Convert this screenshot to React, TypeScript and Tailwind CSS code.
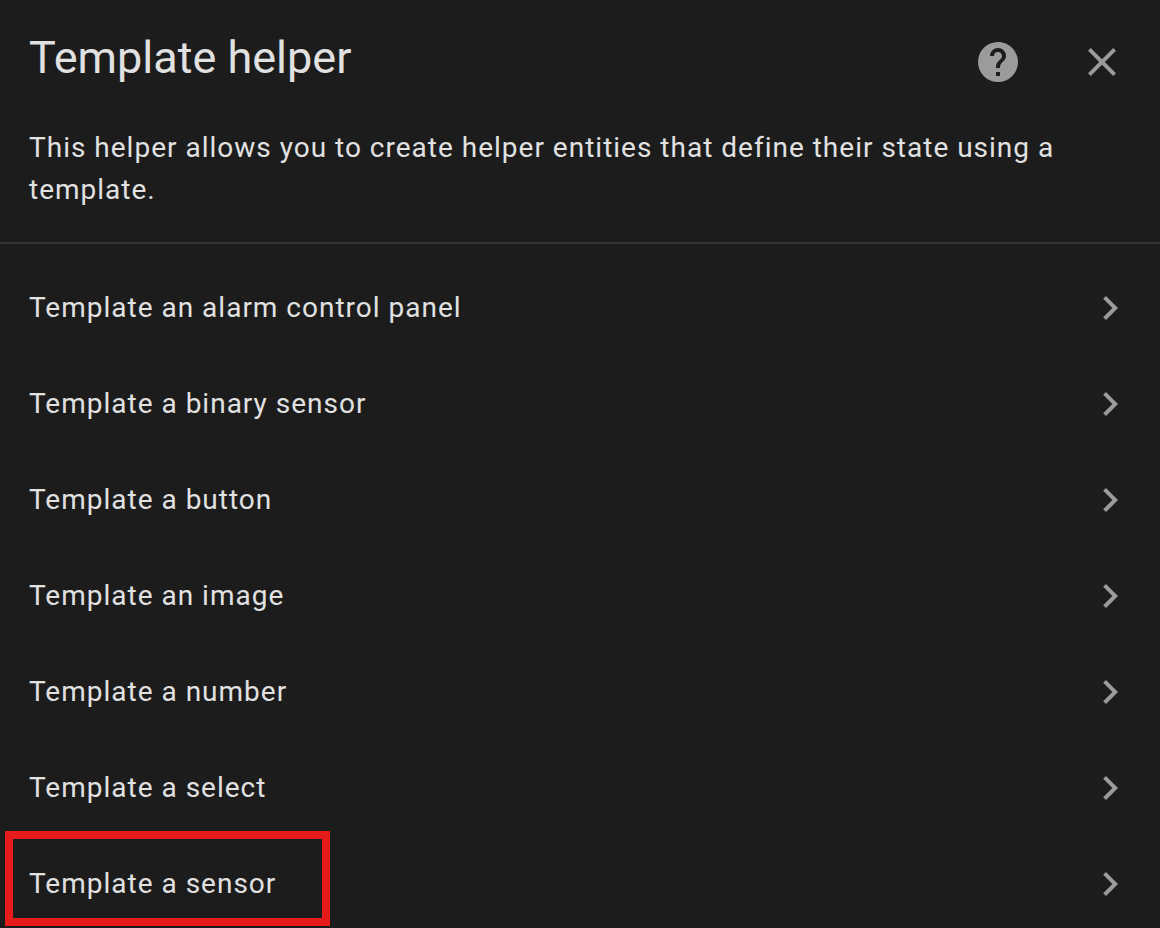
const options = [
  'Template an alarm control panel',
  'Template a binary sensor',
  'Template a button',
  'Template an image',
  'Template a number',
  'Template a select',
  'Template a sensor',
];

export default function App() {
  return (
    <main className="min-h-screen overflow-hidden bg-[#1c1c1c] font-[Roboto,sans-serif] text-[#e1e1e1]">
      <header className="flex items-start justify-between pt-7 pr-[34px] pl-[29px]">
        <h1 className="text-[45px] leading-[60px]">Template helper</h1>
        <nav className="flex items-center gap-14 pt-2.5">
          <a href="#help" aria-label="Help" className="block text-[#9b9b9b]">
            <svg viewBox="0 0 24 24" className="size-12 fill-current">
              <path d="M15.07,11.25L14.17,12.17C13.45,12.89 13,13.5 13,15H11V14.5C11,13.39 11.45,12.39 12.17,11.67L13.41,10.41C13.78,10.05 14,9.55 14,9C14,7.89 13.1,7 12,7A2,2 0 0,0 10,9H8A4,4 0 0,1 12,5A4,4 0 0,1 16,9C16,9.88 15.64,10.67 15.07,11.25M13,19H11V17H13M12,2A10,10 0 0,0 2,12A10,10 0 0,0 12,22A10,10 0 0,0 22,12C22,6.47 17.5,2 12,2Z" />
            </svg>
          </a>
          <button type="button" aria-label="Close" className="block text-[#9b9b9b]">
            <svg viewBox="0 0 24 24" className="size-12 fill-current">
              <path d="M19,6.41L17.59,5L12,10.59L6.41,5L5,6.41L10.59,12L5,17.59L6.41,19L12,13.41L17.59,19L19,17.59L13.41,12L19,6.41Z" />
            </svg>
          </button>
        </nav>
      </header>
      <p className="max-w-[1100px] pt-[39px] pb-[31px] pl-[29px] text-[28px] leading-[42px] tracking-[1px]">
        This helper allows you to create helper entities that define their state using a template.
      </p>
      <ul className="border-t-2 border-[#333333] pt-4">
        {options.map((label) => (
          <li key={label} className="relative">
            <button type="button" className="flex h-24 w-full items-center justify-between pr-[26px] pl-[29px] text-left text-[28px] leading-[42px] tracking-[1px]">
              <span>{label}</span>
              <svg viewBox="0 0 24 24" className="size-12 fill-[#9b9b9b]" aria-hidden="true">
                <path d="M8.59,16.58L13.17,12L8.59,7.41L10,6L16,12L10,18L8.59,16.58Z" />
              </svg>
            </button>
            {label === 'Template a sensor' && (
              <span className="pointer-events-none absolute top-[-5px] left-[5px] h-[95px] w-[325px] border-8 border-[#e61b1b]" />
            )}
          </li>
        ))}
      </ul>
    </main>
  );
}
